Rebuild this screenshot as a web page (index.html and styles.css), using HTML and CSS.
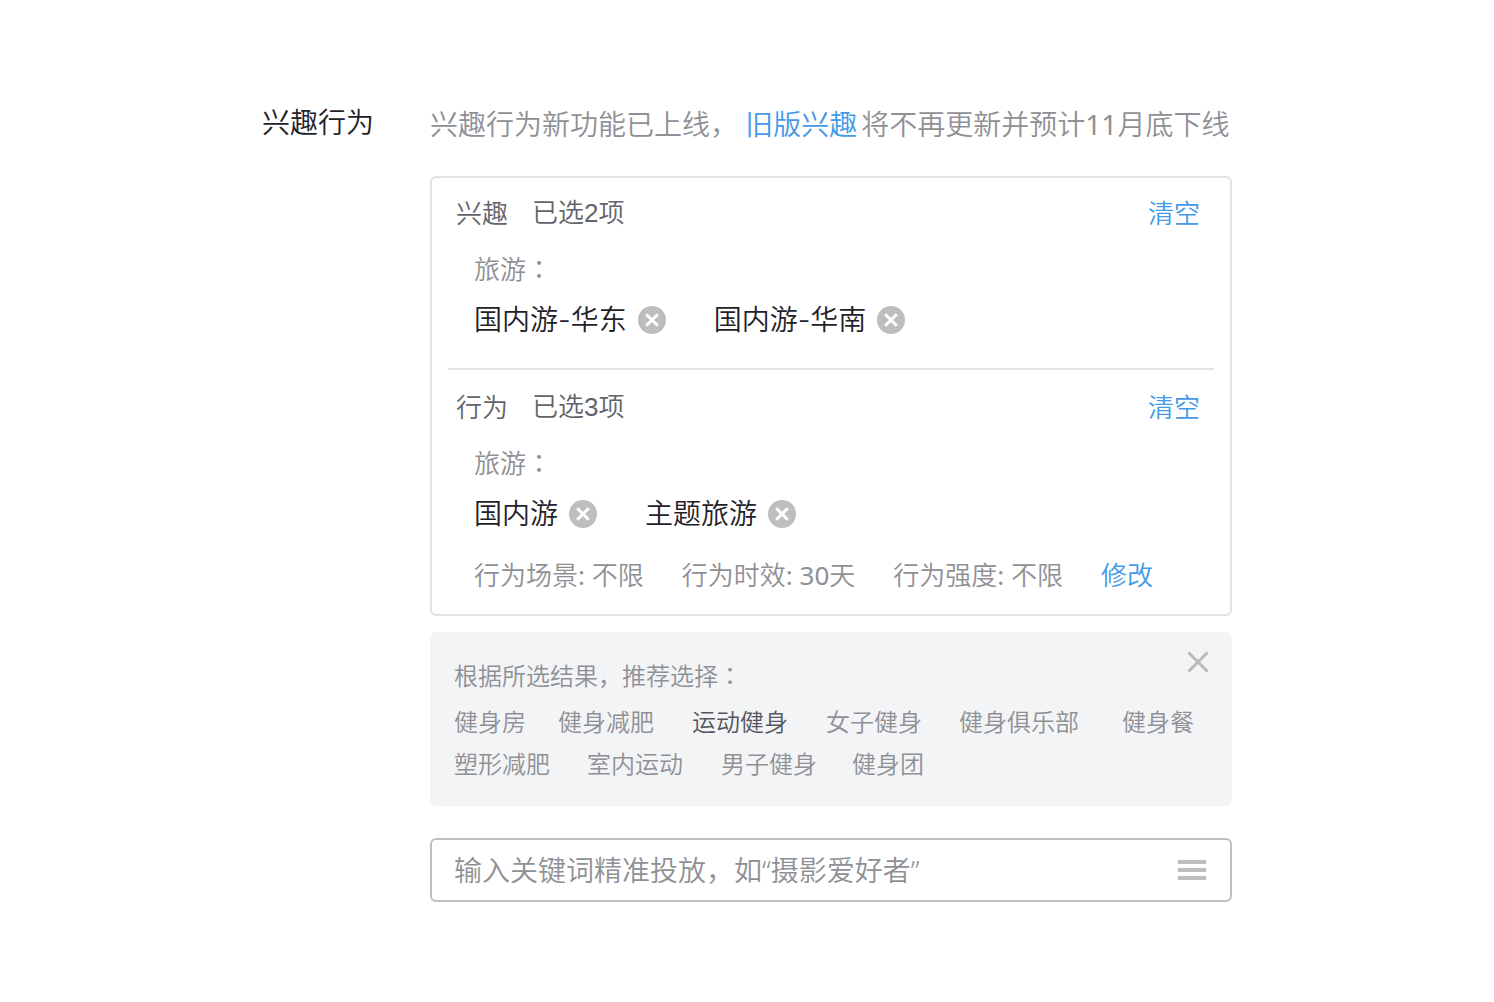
FILE: index.html
```html
<!DOCTYPE html>
<html lang="zh-CN">
<head>
<meta charset="utf-8">
<meta name="viewport" content="width=device-width, initial-scale=1">
<title>兴趣行为</title>
<link rel="stylesheet" href="styles.css">
</head>
<body>
<svg class="sprite" aria-hidden="true">
  <symbol id="remove" viewBox="0 0 28 28">
    <circle cx="14" cy="14" r="14" fill="#bdbec0"/>
    <path d="M8.2 8.2l11.6 11.6M19.8 8.2l-11.6 11.6" stroke="#fff" stroke-width="3"/>
  </symbol>
</svg>
<main class="field">
  <h1 class="field-label">兴趣行为</h1>
  <div class="field-body">
    <p class="notice">兴趣行为新功能已上线， <a class="link notice-link" href="#">旧版兴趣</a>将不再更新并预计<span class="number">11</span>月底下线</p>

    <div class="selected">
      <section class="group">
        <header class="group-head">
          <h2 class="group-title">兴趣</h2>
          <span class="group-count">已选2项</span>
          <button class="link group-clear" type="button">清空</button>
        </header>
        <h3 class="category">旅游<span class="colon" lang="zh-TW">：</span></h3>
        <ul class="tags">
          <li class="tag">国内游-华东<button class="tag-remove" type="button" aria-label="移除国内游-华东"><svg class="tag-icon"><use href="#remove"/></svg></button></li>
          <li class="tag">国内游-华南<button class="tag-remove" type="button" aria-label="移除国内游-华南"><svg class="tag-icon"><use href="#remove"/></svg></button></li>
        </ul>
      </section>
      <section class="group">
        <header class="group-head">
          <h2 class="group-title">行为</h2>
          <span class="group-count">已选3项</span>
          <button class="link group-clear" type="button">清空</button>
        </header>
        <h3 class="category">旅游<span class="colon" lang="zh-TW">：</span></h3>
        <ul class="tags">
          <li class="tag">国内游<button class="tag-remove" type="button" aria-label="移除国内游"><svg class="tag-icon"><use href="#remove"/></svg></button></li>
          <li class="tag">主题旅游<button class="tag-remove" type="button" aria-label="移除主题旅游"><svg class="tag-icon"><use href="#remove"/></svg></button></li>
        </ul>
        <div class="conditions">
          <span>行为场景<span class="number">: </span>不限</span>
          <span>行为时效<span class="number">: 30</span>天</span>
          <span>行为强度<span class="number">: </span>不限</span>
          <button class="link" type="button">修改</button>
        </div>
      </section>
    </div>

    <section class="suggest">
      <header class="suggest-head">
        <h2 class="suggest-title">根据所选结果，推荐选择<span class="colon" lang="zh-TW">：</span></h2>
        <button class="suggest-close" type="button" aria-label="关闭">
          <svg width="22" height="22" viewBox="0 0 22 22"><path d="M1.5 1.5l19 19M20.5 1.5l-19 19" stroke="#b8b9bb" stroke-width="3"/></svg>
        </button>
      </header>
      <div class="words words-first">
        <button class="word" type="button">健身房</button>
        <button class="word" type="button">健身减肥</button>
        <button class="word word-active" type="button">运动健身</button>
        <button class="word" type="button">女子健身</button>
        <button class="word" type="button">健身俱乐部</button>
        <button class="word" type="button">健身餐</button>
      </div>
      <div class="words words-second">
        <button class="word" type="button">塑形减肥</button>
        <button class="word" type="button">室内运动</button>
        <button class="word" type="button">男子健身</button>
        <button class="word" type="button">健身团</button>
      </div>
    </section>

    <div class="search">
      <input class="search-input" type="text" aria-label="关键词" placeholder="输入关键词精准投放，如“摄影爱好者”">
      <button class="search-menu" type="button" aria-label="打开列表">
        <svg width="28" height="20" viewBox="0 0 28 20"><path d="M0 2h28M0 10h28M0 18h28" stroke="#bdbec0" stroke-width="4"/></svg>
      </button>
    </div>
  </div>
</main>
</body>
</html>
```
FILE: styles.css
```css
* {
  box-sizing: border-box;
}

body {
  margin: 0;
  background: #fff;
  color: #8f9095;
  font-family: "Noto Sans", "Noto Sans CJK SC", sans-serif;
  font-size: 28px;
  font-weight: 350;
  line-height: 40px;
}

h1, h2, h3, p, ul {
  margin: 0;
  padding: 0;
  font-size: inherit;
  font-weight: inherit;
}

ul {
  list-style: none;
}

button, input {
  padding: 0;
  border: 0;
  background: none;
  color: inherit;
  font: inherit;
}

button {
  cursor: pointer;
}

svg {
  display: block;
}

.sprite {
  display: none;
}

.link {
  color: #4499e8;
  text-decoration: none;
}

.number {
  font-weight: 400;
}

.colon {
  font-family: "Noto Sans CJK TC", sans-serif;
  line-height: 1;
}

.field {
  display: flex;
  max-width: 970px;
  margin: 0 auto;
  padding: 102px 0 100px;
}

.field-label {
  flex: 0 0 168px;
  color: #1f2228;
}

.field-body {
  flex: 1;
  min-width: 0;
}

.notice {
  padding-top: 2px;
  margin-bottom: 32px;
  white-space: nowrap;
}

.notice-link {
  margin-right: 4px;
}

.selected {
  padding: 0 16px;
  border: 2px solid #e2e2e3;
  border-radius: 6px;
}

.group {
  padding: 15px 0 28px 8px;
}

.group + .group {
  padding: 17px 0 23px 8px;
  border-top: 2px solid #e2e2e3;
}

.group-head {
  display: flex;
  gap: 24px;
  margin-bottom: 20px;
  padding-right: 14px;
  color: #62646b;
  font-size: 26px;
}

.group-count {
  font-family: "Liberation Sans", "Noto Sans CJK SC", sans-serif;
}

.group-clear {
  margin-left: auto;
}

.category {
  margin: 0 0 15px 18px;
  font-size: 26px;
  line-height: 32px;
}

.tags {
  display: flex;
  gap: 48px;
  padding-left: 18px;
  color: #1f2228;
  font-family: Inter, "Noto Sans CJK SC", sans-serif;
}

.tag {
  display: flex;
  align-items: center;
  gap: 11px;
}

.tag-icon {
  width: 28px;
  height: 28px;
}

.conditions {
  display: flex;
  gap: 38px;
  margin-top: 25px;
  padding-left: 18px;
  font-size: 26px;
  line-height: 32px;
}

.suggest {
  margin-top: 16px;
  padding: 19px 23px 21px 24px;
  border-radius: 6px;
  background: #f3f4f6;
  font-size: 24px;
}

.suggest-head {
  display: flex;
  align-items: flex-start;
  justify-content: space-between;
}

.suggest-title {
  line-height: 50px;
}

.words {
  display: grid;
  line-height: 42px;
}

.words-first {
  grid-template-columns: 104px 134px 134px 133px 163px auto;
}

.words-second {
  grid-template-columns: 133px 134px 131px auto;
}

.word {
  text-align: left;
}

.word-active {
  color: #54565d;
}

.search {
  display: flex;
  align-items: center;
  height: 64px;
  margin-top: 32px;
  padding: 0 24px 0 22px;
  border: 2px solid #bfbfc1;
  border-radius: 6px;
}

.search-input {
  flex: 1;
  min-width: 0;
  height: 40px;
  outline: 0;
}

.search-input::placeholder {
  color: #8f9095;
  opacity: 1;
}
```
